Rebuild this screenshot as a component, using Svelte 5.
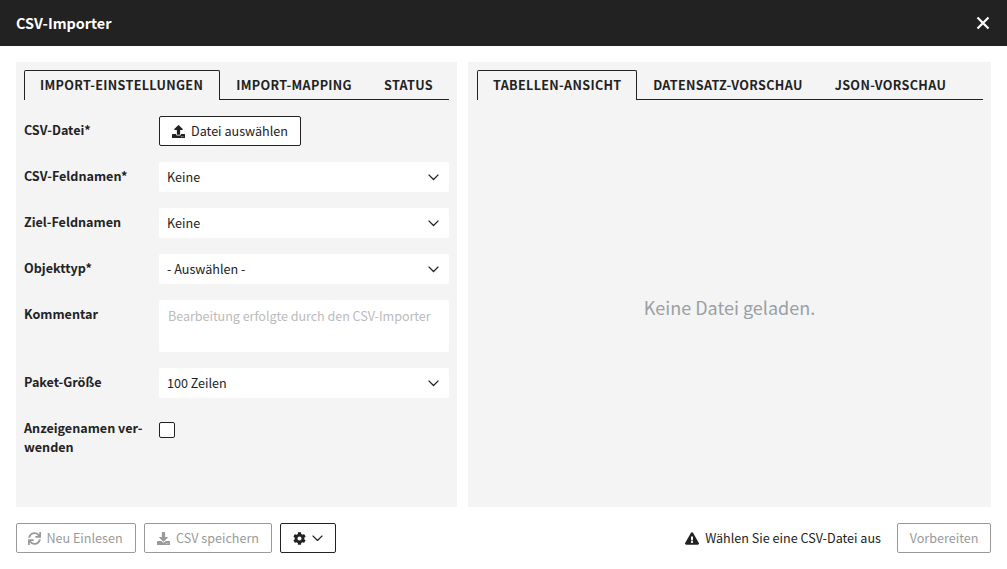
<script>
const leftTabs = ["Import-Einstellungen", "Import-Mapping", "Status"];
const rightTabs = ["Tabellen-Ansicht", "Datensatz-Vorschau", "JSON-Vorschau"];

const icons = {
	upload: "M296 384h-80c-13.3 0-24-10.7-24-24V192h-87.7c-17.8 0-26.7-21.5-14.1-34.1L242.3 5.7c7.5-7.5 19.8-7.5 27.3 0l152.2 152.2c12.6 12.6 3.7 34.1-14.1 34.1H320v168c0 13.3-10.7 24-24 24zm216-8v112c0 13.3-10.7 24-24 24H24c-13.3 0-24-10.7-24-24V376c0-13.3 10.7-24 24-24h136v8c0 30.9 25.1 56 56 56h80c30.9 0 56-25.1 56-56v-8h136c13.3 0 24 10.7 24 24zm-124 88c0-11-9-20-20-20s-20 9-20 20 9 20 20 20 20-9 20-20zm64 0c0-11-9-20-20-20s-20 9-20 20 9 20 20 20 20-9 20-20z",
	download: "M216 0h80c13.3 0 24 10.7 24 24v168h87.7c17.8 0 26.7 21.5 14.1 34.1L269.7 378.3c-7.5 7.5-19.8 7.5-27.3 0L90.1 226.1c-12.6-12.6-3.7-34.1 14.1-34.1H192V24c0-13.3 10.7-24 24-24zm296 376v112c0 13.3-10.7 24-24 24H24c-13.3 0-24-10.7-24-24V376c0-13.3 10.7-24 24-24h146.7l49 49c20.1 20.1 52.5 20.1 72.6 0l49-49H488c13.3 0 24 10.7 24 24zm-124 88c0-11-9-20-20-20s-20 9-20 20 9 20 20 20 20-9 20-20zm64 0c0-11-9-20-20-20s-20 9-20 20 9 20 20 20 20-9 20-20z",
	sync: "M440.65 12.57l4 82.77A247.16 247.16 0 0 0 255.83 8C134.73 8 33.91 94.92 12.29 209.82A12 12 0 0 0 24.09 224h49.05a12 12 0 0 0 11.67-9.26 175.91 175.91 0 0 1 317-56.94l-101.46-4.86a12 12 0 0 0-12.57 12v47.41a12 12 0 0 0 12 12H500a12 12 0 0 0 12-12V12a12 12 0 0 0-12-12h-47.37a12 12 0 0 0-11.98 12.57zM255.83 432a175.61 175.61 0 0 1-146-77.8l101.8 4.87a12 12 0 0 0 12.57-12v-47.4a12 12 0 0 0-12-12H12a12 12 0 0 0-12 12V500a12 12 0 0 0 12 12h47.35a12 12 0 0 0 12-12.6l-4.15-82.57A247.17 247.17 0 0 0 255.83 504c121.11 0 221.93-86.92 243.55-201.82a12 12 0 0 0-11.8-14.18h-49.05a12 12 0 0 0-11.67 9.26A175.86 175.86 0 0 1 255.83 432z",
	cog: "M487.4 315.7l-42.6-24.6c4.3-23.2 4.3-47 0-70.2l42.6-24.6c4.9-2.8 7.1-8.6 5.5-14-11.1-35.6-30-67.8-54.7-94.6-3.8-4.1-10-5.1-14.8-2.3L380.8 110c-17.9-15.4-38.5-27.3-60.8-35.1V25.8c0-5.6-3.9-10.5-9.4-11.7-36.7-8.2-74.3-7.8-109.2 0-5.5 1.2-9.4 6.1-9.4 11.7V75c-22.2 7.9-42.8 19.8-60.8 35.1L88.7 85.5c-4.9-2.8-11-1.9-14.8 2.3-24.7 26.7-43.6 58.9-54.7 94.6-1.7 5.4.6 11.2 5.5 14L67.3 221c-4.3 23.2-4.3 47 0 70.2l-42.6 24.6c-4.9 2.8-7.1 8.6-5.5 14 11.1 35.6 30 67.8 54.7 94.6 3.8 4.1 10 5.1 14.8 2.3l42.6-24.6c17.9 15.4 38.5 27.3 60.8 35.1v49.2c0 5.6 3.9 10.5 9.4 11.7 36.7 8.2 74.3 7.8 109.2 0 5.5-1.2 9.4-6.1 9.4-11.7v-49.2c22.2-7.9 42.8-19.8 60.8-35.1l42.6 24.6c4.9 2.8 11 1.9 14.8-2.3 24.7-26.7 43.6-58.9 54.7-94.6 1.5-5.5-.7-11.3-5.6-14.1zM256 336c-44.1 0-80-35.9-80-80s35.9-80 80-80 80 35.9 80 80-35.9 80-80 80z",
};
const warning = "M569.517 440.013C587.975 472.007 564.806 512 527.94 512H48.054c-36.937 0-59.999-40.055-41.577-71.987L246.423 24.028c18.467-32.009 64.72-31.951 83.154 0l239.94 416.985zM288 354c-25.405 0-46 20.595-46 46s20.595 46 46 46 46-20.595 46-46-20.595-46-46-46zm-43.673-165.346l7.418 136c.347 6.364 5.609 11.346 11.982 11.346h48.546c6.373 0 11.635-4.982 11.982-11.346l7.418-136c.375-6.874-5.098-12.654-11.982-12.654h-63.383c-6.884 0-12.356 5.78-11.981 12.654z";
</script>

{#snippet chevron(cls)}
	<svg class={cls} width="11" height="6.5" viewBox="0 0 11 6.5" aria-hidden="true">
		<polyline points="0.6,0.6 5.5,5.5 10.4,0.6" fill="none" stroke="currentColor" stroke-width="1.3" />
	</svg>
{/snippet}

{#snippet selectField(value)}
	<div class="select-wrap">
		<select class="field">
			<option>{value}</option>
		</select>
		{@render chevron("select-chevron")}
	</div>
{/snippet}

{#snippet tabbar(tabs)}
	<div class="tabs">
		{#each tabs as tab, i}
			<button class={`tab ${i == 0 ? "active" : ""}`}>{tab}</button>
		{/each}
	</div>
{/snippet}

<main class="modal">
	<header class="header">
		<h1 class="title">CSV-Importer</h1>
		<button class="close" aria-label="Schließen">
			<svg width="14" height="14" viewBox="0 0 14 14">
				<path d="M1.5 1.5 L12.5 12.5 M12.5 1.5 L1.5 12.5" stroke="#fff" stroke-width="2.2" fill="none" />
			</svg>
		</button>
	</header>

	<div class="content">
		<section class="panel left">
			{@render tabbar(leftTabs)}
			<form class="form">
				<div class="row">
					<span class="label">CSV-Datei*</span>
					<button type="button" class="btn file-btn">
						<svg class="ico" viewBox="0 0 512 512"><path d={icons.upload} /></svg>
						Datei auswählen
					</button>
				</div>
				<div class="row">
					<span class="label">CSV-Feldnamen*</span>
					{@render selectField("Keine")}
				</div>
				<div class="row">
					<span class="label">Ziel-Feldnamen</span>
					{@render selectField("Keine")}
				</div>
				<div class="row">
					<span class="label">Objekttyp*</span>
					{@render selectField("- Auswählen -")}
				</div>
				<div class="row">
					<span class="label">Kommentar</span>
					<textarea class="field area" placeholder="Bearbeitung erfolgte durch den CSV-Importer"></textarea>
				</div>
				<div class="row">
					<span class="label">Paket-Größe</span>
					{@render selectField("100 Zeilen")}
				</div>
				<div class="row">
					<span class="label">Anzeigenamen ver-<br />wenden</span>
					<input type="checkbox" class="check" />
				</div>
			</form>
		</section>

		<section class="panel right">
			{@render tabbar(rightTabs)}
			<div class="empty">Keine Datei geladen.</div>
		</section>
	</div>

	<footer class="footer">
		<button class="btn reload" disabled>
			<svg class="ico" viewBox="0 0 512 512"><path d={icons.sync} /></svg>
			Neu Einlesen
		</button>
		<button class="btn save" disabled>
			<svg class="ico" viewBox="0 0 512 512"><path d={icons.download} /></svg>
			CSV speichern
		</button>
		<button class="btn menu-btn" aria-label="Einstellungen">
			<svg class="ico" viewBox="0 0 512 512"><path d={icons.cog} /></svg>
			{@render chevron("menu-chevron")}
		</button>
		<div class="message">
			<svg class="warn" viewBox="0 0 576 512"><path d={warning} /></svg>
			<span>Wählen Sie eine CSV-Datei aus</span>
		</div>
		<button class="btn prepare" disabled>Vorbereiten</button>
	</footer>
</main>

<style>
	:global(body) {
		margin: 0;
		background: #fff;
	}
	.modal {
		display: flex;
		flex-direction: column;
		height: 569px;
		font-family: "Noto Sans CJK JP", "Noto Sans", sans-serif;
		font-size: 12.6px;
		line-height: 18px;
		color: #222;
	}
	.header {
		display: flex;
		align-items: center;
		justify-content: space-between;
		height: 46px;
		padding: 0 17px 0 16px;
		background: #222;
		color: #fff;
		flex: none;
	}
	.title {
		margin: 0;
		font-size: 14.4px;
		font-weight: 700;
		line-height: 20px;
	}
	.close {
		display: flex;
		padding: 0;
		border: none;
		background: none;
	}
	.content {
		display: flex;
		flex: 1;
		gap: 11px;
		padding: 16px 16px 0;
		min-height: 0;
	}
	.panel {
		display: flex;
		flex-direction: column;
		background: #f4f4f4;
		padding: 8px;
		box-sizing: border-box;
	}
	.left {
		width: 441px;
	}
	.right {
		flex: 1;
	}
	.tabs {
		display: flex;
		height: 30px;
		box-sizing: border-box;
		border-bottom: 1px solid #222;
		flex: none;
	}
	.right .tabs {
		margin-left: 1px;
	}
	.tab {
		height: 30px;
		padding: 0 15px 2px;
		border: 1px solid transparent;
		border-bottom: none;
		border-radius: 2px 2px 0 0;
		background: none;
		font: inherit;
		font-size: 12.6px;
		font-weight: 700;
		letter-spacing: 0.33px;
		text-transform: uppercase;
		color: #222;
		white-space: nowrap;
	}
	.tab.active {
		border-color: #222;
		background: #f4f4f4;
	}
	.left .tab.active {
		padding-right: 16px;
	}
	.right .tab.active {
		padding-right: 14.6px;
	}
	.form {
		display: flex;
		flex-direction: column;
		gap: 16px;
		margin-top: 16px;
	}
	.row {
		display: flex;
		align-items: flex-start;
	}
	.label {
		width: 135px;
		flex: none;
		padding-top: 4px;
		font-weight: 700;
		line-height: 19px;
	}
	.field {
		display: block;
		width: 290px;
		height: 30px;
		box-sizing: border-box;
		padding: 0 8px;
		border: none;
		border-radius: 2px;
		background: #fff;
		font: inherit;
		color: #222;
		appearance: none;
		outline: none;
	}
	.select-wrap {
		position: relative;
	}
	.select-chevron {
		position: absolute;
		right: 10px;
		top: 12px;
		color: #222;
		pointer-events: none;
	}
	.area {
		height: 52px;
		padding: 7px 9px;
		resize: none;
	}
	.area::placeholder {
		color: #bbb;
		opacity: 1;
		letter-spacing: -0.05px;
	}
	.check {
		width: 16px;
		height: 16px;
		margin: 8px 0 0;
		border: 1px solid #222;
		border-radius: 2px;
		background: #fff;
		appearance: none;
	}
	.btn {
		display: inline-flex;
		align-items: center;
		justify-content: center;
		gap: 6px;
		height: 30px;
		box-sizing: border-box;
		padding: 0;
		border: 1px solid #222;
		border-radius: 2px;
		background: #fff;
		font: inherit;
		color: #222;
		white-space: nowrap;
	}
	.btn:disabled {
		border-color: #999;
		color: #999;
	}
	.ico {
		width: 13px;
		height: 13px;
		fill: currentColor;
	}
	.file-btn {
		width: 142px;
	}
	.reload {
		width: 120px;
		gap: 5px;
		padding-right: 1px;
	}
	.save {
		width: 128px;
	}
	.empty {
		flex: 1;
		display: flex;
		align-items: center;
		justify-content: center;
		padding-top: 14px;
		font-size: 18px;
		line-height: 24px;
		color: #99a0a6;
	}
	.footer {
		display: flex;
		align-items: center;
		gap: 8px;
		padding: 16px;
		flex: none;
	}
	.menu-btn {
		width: 56px;
	}
	.message {
		display: flex;
		align-items: center;
		gap: 6px;
		margin-left: auto;
		margin-right: 8px;
	}
	.warn {
		width: 14px;
		height: 13px;
		fill: #222;
	}
	.prepare {
		width: 94px;
	}
</style>
